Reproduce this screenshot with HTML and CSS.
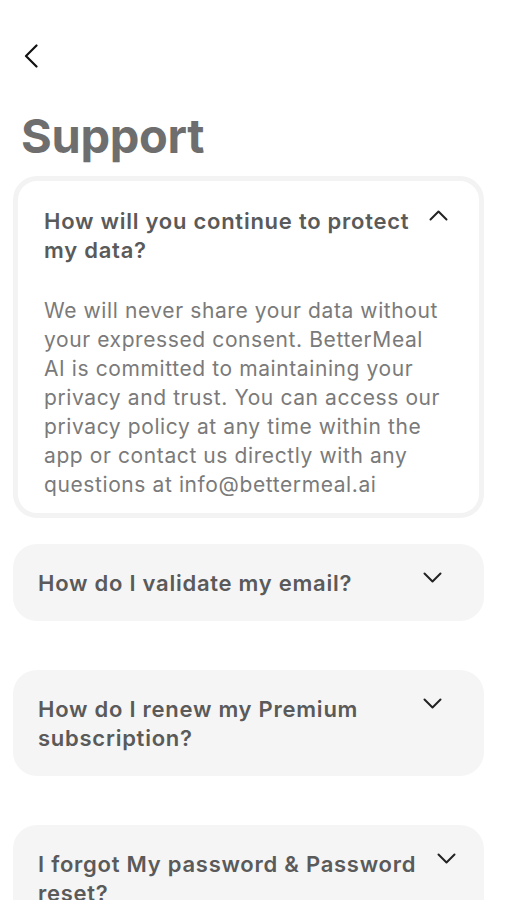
FILE: index.html
```html
<!DOCTYPE html>
<html lang="en">
<head>
    <meta charset="UTF-8">
    <meta name="viewport" content="width=device-width, initial-scale=1.0">
    <title>Support</title>
    <link rel="stylesheet" href="styles.css">
</head>
<body>
    <div class="screen">
        <button class="back" type="button" aria-label="Back">
            <svg width="14" height="24" viewBox="0 0 14 24">
                <path d="M12.5 1.5 L2 12 L12.5 22.5" fill="none" stroke="#111" stroke-width="2.2" stroke-linecap="round" stroke-linejoin="round"/>
            </svg>
        </button>

        <h1 class="title">Support</h1>

        <div class="faq">
            <div class="item open">
                <div class="item-head">
                    <span class="question">How will you continue to protect my data?</span>
                    <svg class="chev" width="19" height="11" viewBox="0 0 19 11">
                        <path d="M1.5 9.5 L9.5 1.5 L17.5 9.5" fill="none" stroke="#222" stroke-width="2" stroke-linecap="round" stroke-linejoin="round"/>
                    </svg>
                </div>
                <p class="answer">We will never share your data without your expressed consent. BetterMeal AI is committed to maintaining your privacy and trust. You can access our privacy policy at any time within the app or contact us directly with any questions at info@bettermeal.ai</p>
            </div>

            <div class="item">
                <div class="item-head">
                    <span class="question">How do I validate my email?</span>
                    <svg class="chev" width="19" height="11" viewBox="0 0 19 11">
                        <path d="M1.5 1.5 L9.5 9.5 L17.5 1.5" fill="none" stroke="#222" stroke-width="2" stroke-linecap="round" stroke-linejoin="round"/>
                    </svg>
                </div>
            </div>

            <div class="item">
                <div class="item-head">
                    <span class="question">How do I renew my Premium subscription?</span>
                    <svg class="chev" width="19" height="11" viewBox="0 0 19 11">
                        <path d="M1.5 1.5 L9.5 9.5 L17.5 1.5" fill="none" stroke="#222" stroke-width="2" stroke-linecap="round" stroke-linejoin="round"/>
                    </svg>
                </div>
            </div>

            <div class="item">
                <div class="item-head">
                    <span class="question long">I forgot My password &amp; Password reset?</span>
                    <svg class="chev" width="19" height="11" viewBox="0 0 19 11">
                        <path d="M1.5 1.5 L9.5 9.5 L17.5 1.5" fill="none" stroke="#222" stroke-width="2" stroke-linecap="round" stroke-linejoin="round"/>
                    </svg>
                </div>
            </div>
        </div>
    </div>
</body>
</html>
```

FILE: styles.css
```css
body {
    margin: 0;
    background: #fff;
    font-family: Inter, "Noto Sans", Arial, sans-serif;
}
.screen {
    padding: 44px 22px 0 13px;
}
.back {
    display: block;
    margin: 0 0 0 11px;
    padding: 0;
    border: none;
    background: none;
    height: 24px;
    cursor: pointer;
}
.back svg {
    display: block;
}
.title {
    margin: 40px 0 0 0;
    padding-left: 8px;
    font-size: 47px;
    line-height: 56px;
    font-weight: 700;
    letter-spacing: -0.3px;
    color: #6e6e6e;
}
.faq {
    margin-top: 12px;
}
.item {
    background: #f5f5f5;
    border-radius: 24px;
    padding: 25px 25px 23px 25px;
    margin-bottom: 49px;
}
.item.open {
    background: #fff;
    border: 5px solid #f3f3f3;
    padding: 26px 30px 14px 26px;
    margin-bottom: 26px;
}
.item-head {
    display: flex;
    align-items: flex-start;
    gap: 12px;
}
.question {
    width: 373px;
    font-size: 22px;
    line-height: 29px;
    font-weight: 600;
    letter-spacing: 0.75px;
    color: #5a5a5a;
}
.question.long {
    width: 387px;
}
.chev {
    flex: none;
    margin-top: 3px;
}
.answer {
    margin: 31px 0 0 0;
    font-size: 21px;
    line-height: 29px;
    font-weight: 400;
    letter-spacing: 0.6px;
    color: #7a7a7a;
}
```
